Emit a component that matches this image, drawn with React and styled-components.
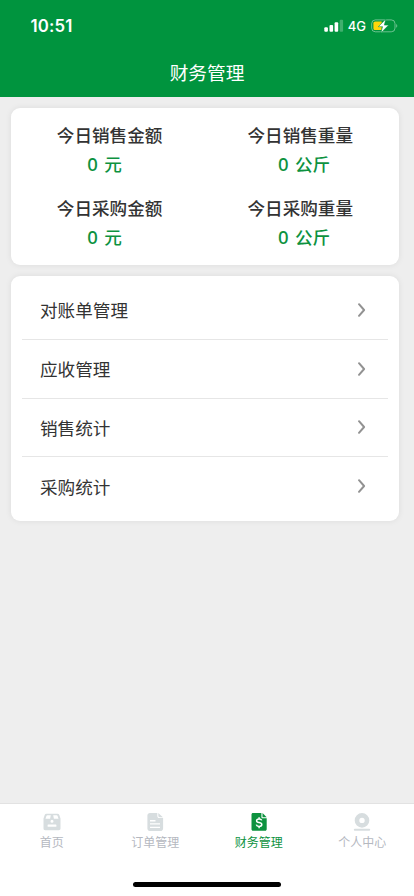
import React from 'react';
import styled, { createGlobalStyle } from 'styled-components';

const summary = [
  { label: '今日销售金额', value: '0', unit: '元' },
  { label: '今日销售重量', value: '0', unit: '公斤' },
  { label: '今日采购金额', value: '0', unit: '元' },
  { label: '今日采购重量', value: '0', unit: '公斤' },
];

const menu = ['对账单管理', '应收管理', '销售统计', '采购统计'];

const HomeIcon = () => (
  <svg width="20" height="20" viewBox="0 0 20 20">
    <path
      fill="currentColor"
      fillRule="evenodd"
      d="M4.500 1.700h11c.9 0 1.500.4 1.800 1.200l1.200 3.600v10c0 1-.7 1.700-1.700 1.700H3.200c-1 0-1.700-.7-1.700-1.700v-10l1.200-3.600c.3-.8.900-1.200 1.800-1.200zM5.400 3.200c-.5 0-.8.2-1 .7L3.500 6.700h4.600l.7-3.500zM11.200 3.200l.7 3.500h4.600l-.9-2.800c-.2-.5-.5-.7-1-.7zM6.200 12.400c-.4 0-.6.2-.6.6v1.200c0 .4.200.6.600.6h7.600c.4 0 .6-.2.600-.6V13c0-.4-.2-.6-.6-.6zM10 7.800a1.500 1.500 0 1 0 0 3 1.500 1.500 0 1 0 0-3z"
    />
  </svg>
);

const OrderIcon = () => (
  <svg width="20" height="20" viewBox="0 0 20 20">
    <path
      fill="currentColor"
      fillRule="evenodd"
      d="M5 1h7.300v3c0 1.300.8 2.100 2.100 2.100h3.700v10.400c0 1.500-1.100 2.600-2.600 2.600H5c-1.500 0-2.600-1.100-2.600-2.600V3.600C2.400 2.100 3.500 1 5 1zM5 8v1.600h5.500V8zM5 11.300v1.300h10v-1.300zM5 14.800v1.300h10v-1.300z"
    />
    <path fill="currentColor" d="M13.300 1.100 17.900 5.200h-3.100c-1 0-1.500-.5-1.500-1.400z" />
  </svg>
);

const FinanceIcon = () => (
  <svg width="20" height="20" viewBox="0 0 20 20">
    <path fill="currentColor" d="M4 1h8.400v4c0 .8.500 1.300 1.300 1.300h4v11c0 .9-.6 1.500-1.500 1.500H4c-.9 0-1.500-.6-1.500-1.500V2.500C2.500 1.600 3.100 1 4 1z" />
    <path fill="currentColor" d="M13.500 1 17.700 5.300h-4.200z" />
    <path
      fill="none"
      stroke="#fff"
      strokeWidth="1.500"
      d="M12.700 8.400c-.3-1-1.300-1.500-2.600-1.500-1.500 0-2.500.7-2.500 1.800 0 2.700 5.200 1.100 5.200 3.900 0 1.200-1.100 1.900-2.600 1.900-1.600 0-2.600-.7-2.900-1.900M10.100 5.200v1.700M10.100 14.400v1.900"
    />
  </svg>
);

const UserIcon = () => (
  <svg width="20" height="20" viewBox="0 0 20 20">
    <circle cx="10" cy="8.400" r="5" fill="none" stroke="currentColor" strokeWidth="4.600" />
    <path stroke="currentColor" strokeWidth="2" strokeLinecap="round" d="M2.800 17.700h14.400" />
  </svg>
);

const tabs = [
  { label: '首页', Icon: HomeIcon },
  { label: '订单管理', Icon: OrderIcon },
  { label: '财务管理', Icon: FinanceIcon, active: true },
  { label: '个人中心', Icon: UserIcon },
];

const App = () => {
  return (
    <>
      <GlobalStyle />
      <Page>
        <Header>
          <StatusBar>
            <Time>10:51</Time>
            <StatusIcons>
              <svg width="20" height="14" viewBox="0 0 20 14">
                <g fill="#fff">
                  <rect x="0.300" y="8.200" width="3.600" height="4.500" rx="1" />
                  <rect x="5.500" y="5.900" width="3.600" height="6.800" rx="1" />
                  <rect x="10.600" y="3.200" width="3.600" height="9.500" rx="1" />
                  <rect x="15.700" y="0.700" width="3.400" height="12" rx="1" opacity=".25" />
                </g>
              </svg>
              <Network>4G</Network>
              <svg width="28" height="16" viewBox="0 0 28 16">
                <rect x="0.700" y="1.900" width="23.300" height="11.900" rx="3.700" fill="none" stroke="#fff" strokeOpacity=".42" />
                <path d="M25.300 6c1.300.6 1.300 3.200 0 3.800z" fill="#fff" opacity=".5" />
                <path d="M4.300 3.600h6.400v8.500H4.300c-1.200 0-1.900-.7-1.900-1.900V5.500c0-1.200.7-1.900 1.900-1.900z" fill="#ffd60a" />
                <path d="M14.800 1 7.300 8.700h4.200l-1.600 6.200 7.800-7.800h-4.300z" fill="#fff" stroke="#00943e" strokeWidth=".6" />
              </svg>
            </StatusIcons>
          </StatusBar>
          <Title>财务管理</Title>
        </Header>

        <Content>
          <SummaryCard>
            {summary.map(({ label, value, unit }) => (
              <div key={label}>
                <SummaryLabel>{label}</SummaryLabel>
                <SummaryValue>
                  <span>{value}</span>
                  {unit}
                </SummaryValue>
              </div>
            ))}
          </SummaryCard>

          <MenuCard>
            {menu.map((name) => (
              <MenuRow key={name}>
                {name}
                <svg width="10" height="16" viewBox="0 0 10 16">
                  <path d="M2 2.200 7.100 8 2 13.800" fill="none" stroke="#929292" strokeWidth="2" strokeLinecap="round" strokeLinejoin="round" />
                </svg>
              </MenuRow>
            ))}
          </MenuCard>
        </Content>

        <TabBar>
          {tabs.map(({ label, Icon, active }) => (
            <Tab key={label} $active={active}>
              <Icon />
              <TabLabel $active={active}>{label}</TabLabel>
            </Tab>
          ))}
          <HomeIndicator />
        </TabBar>
      </Page>
    </>
  );
};

export default App;

const GlobalStyle = createGlobalStyle`
  * {
    box-sizing: border-box;
  }

  body {
    margin: 0;
    font-family: "Noto Sans CJK SC", sans-serif;
  }

  svg {
    display: block;
    flex: none;
  }
`

const Page = styled.div`
  display: flex;
  flex-direction: column;
  height: 896px;
  background: #eee;
`

const Header = styled.header`
  height: 97px;
  flex: none;
  background: #00943e;
  color: #fff;
`

const StatusBar = styled.div`
  display: flex;
  align-items: center;
  justify-content: space-between;
  height: 52px;
  padding: 0 15px 0 30.5px;
`

const Time = styled.div`
  font: 600 16.8px/20px Inter, sans-serif;
  letter-spacing: 0.15px;
`

const StatusIcons = styled.div`
  display: flex;
  align-items: center;
`

const Network = styled.span`
  margin: 0 5px 0 4px;
  font: 500 13px/16px Inter, sans-serif;
`

const Title = styled.h1`
  margin: 7px 0 0;
  font-size: 18.7px;
  font-weight: 400;
  line-height: 26px;
  text-align: center;
`

const Content = styled.main`
  flex: 1;
  padding: 11px 15.5px 0 11px;
`

const Card = styled.section`
  border-radius: 9px;
  background: #fff;
  box-shadow: 0 0 6px rgba(0, 0, 0, 0.08);
`

const SummaryCard = styled(Card)`
  display: grid;
  grid-template-columns: 190.7px 1fr;
  row-gap: 15px;
  height: 157px;
  padding: 12px 0 12px 45.8px;
  align-content: start;
`

const SummaryLabel = styled.div`
  color: #333;
  font-size: 17.6px;
  font-weight: 500;
  line-height: 30px;
`

const SummaryValue = styled.div`
  display: flex;
  padding-left: 30.5px;
  color: #0d923f;
  font-size: 17.6px;
  font-weight: 500;
  line-height: 28px;

  span {
    width: 17px;
    font-family: "Noto Sans", sans-serif;
    font-size: 18.5px;
  }
`

const MenuCard = styled(Card)`
  height: 245px;
  margin-top: 11px;
  padding: 4.5px 11px;
`

const MenuRow = styled.div`
  display: flex;
  align-items: center;
  justify-content: space-between;
  height: 58.6px;
  padding: 0 21px 0 18px;
  color: #333;
  font-size: 17.6px;

  & + & {
    border-top: 1px solid #e6e6e6;
  }
`

const TabBar = styled.nav`
  position: relative;
  display: flex;
  height: 93px;
  flex: none;
  border-top: 1px solid #e2e2e2;
  background: #fff;
`

const Tab = styled.div`
  display: flex;
  flex: 1;
  flex-direction: column;
  align-items: center;
  padding-top: 8px;
  color: ${(props) => (props.$active ? '#0d923f' : '#d7dddf')};
`

const TabLabel = styled.span`
  margin-top: 1px;
  color: ${(props) => (props.$active ? '#0d923f' : '#b5b8bf')};
  font-size: 12px;
  line-height: 18px;
`

const HomeIndicator = styled.div`
  position: absolute;
  bottom: 9px;
  left: 133px;
  width: 148px;
  height: 5px;
  border-radius: 3px;
  background: #000;
`
